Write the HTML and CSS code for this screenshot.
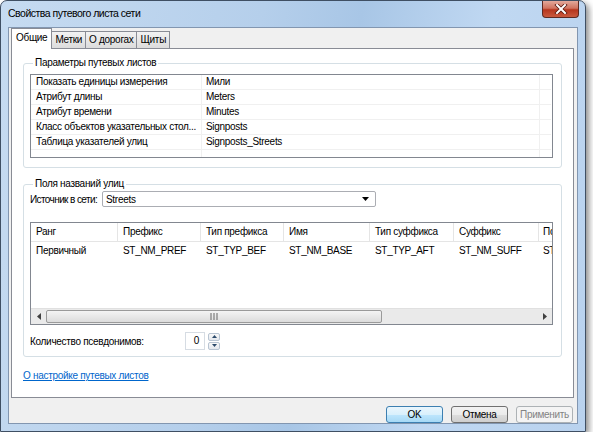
FILE: index.html
```
<!DOCTYPE html>
<html lang="ru">
<head>
  <meta charset="UTF-8" />
  <title>Свойства путевого листа сети</title>
  <link rel="stylesheet" href="styles.css">
</head>
<body>
  <div class="window">
    <div class="titlebar">
      <span class="title">Свойства путевого листа сети</span>
      <div class="close-btn">
        <svg width="14" height="10" viewBox="0 0 14 10">
          <path d="M3 1 L11 9 M11 1 L3 9" stroke="#5a1a10" stroke-width="3.6" stroke-linecap="square"/>
          <path d="M3 1 L11 9 M11 1 L3 9" stroke="#fff" stroke-width="2" stroke-linecap="square"/>
        </svg>
      </div>
    </div>

    <div class="client">
      <!-- вкладки -->
      <div class="tabs">
        <div class="tab active">Общие</div>
        <div class="tab">Метки</div>
        <div class="tab">О дорогах</div>
        <div class="tab">Щиты</div>
      </div>

      <div class="panel">
        <fieldset class="group group-params">
          <legend>Параметры путевых листов</legend>
          <div class="listview props">
            <div class="prop-row"><div class="c1">Показать единицы измерения</div><div class="c2">Мили</div></div>
            <div class="prop-row"><div class="c1">Атрибут длины</div><div class="c2">Meters</div></div>
            <div class="prop-row"><div class="c1">Атрибут времени</div><div class="c2">Minutes</div></div>
            <div class="prop-row"><div class="c1">Класс объектов указательных стол...</div><div class="c2">Signposts</div></div>
            <div class="prop-row"><div class="c1">Таблица указателей улиц</div><div class="c2">Signposts_Streets</div></div>
            <div class="prop-row"><div class="c1"></div><div class="c2"></div></div>
          </div>
        </fieldset>

        <fieldset class="group group-streets">
          <legend>Поля названий улиц</legend>
          <div class="source-row">
            <span class="source-label">Источник в сети:</span>
            <div class="combo">
              <span>Streets</span>
              <svg width="7" height="4" viewBox="0 0 7 4"><path d="M0 0 H7 L3.5 4 Z" fill="#000"/></svg>
            </div>
          </div>

          <div class="listview grid">
            <div class="grid-head">
              <div class="gc">Ранг</div>
              <div class="gc">Префикс</div>
              <div class="gc">Тип префикса</div>
              <div class="gc">Имя</div>
              <div class="gc">Тип суффикса</div>
              <div class="gc">Суффикс</div>
              <div class="gc">Псевдоним</div>
            </div>
            <div class="grid-row">
              <div class="gc">Первичный</div>
              <div class="gc">ST_NM_PREF</div>
              <div class="gc">ST_TYP_BEF</div>
              <div class="gc">ST_NM_BASE</div>
              <div class="gc">ST_TYP_AFT</div>
              <div class="gc">ST_NM_SUFF</div>
              <div class="gc">ST_NM_FULL</div>
            </div>
            <div class="grid-fill"></div>
            <div class="hscroll">
              <div class="arrow">
                <svg width="4" height="7" viewBox="0 0 4 7"><path d="M4 0 V7 L0 3.5 Z" fill="#404040"/></svg>
              </div>
              <div class="track">
                <div class="thumb">
                  <svg width="8" height="7" viewBox="0 0 8 7"><path d="M1 0 V7 M4 0 V7 M7 0 V7" stroke="#666" stroke-width="1"/></svg>
                </div>
              </div>
              <div class="arrow">
                <svg width="4" height="7" viewBox="0 0 4 7"><path d="M0 0 V7 L4 3.5 Z" fill="#404040"/></svg>
              </div>
            </div>
          </div>

          <div class="alias-row">
            <span class="alias-label">Количество псевдонимов:</span>
            <div class="spin-value">0</div>
            <div class="spin-btns">
              <div class="spin-btn"><svg width="5" height="3" viewBox="0 0 5 3"><path d="M0 3 H5 L2.5 0 Z" fill="#2b4a6b"/></svg></div>
              <div class="spin-btn"><svg width="5" height="3" viewBox="0 0 5 3"><path d="M0 0 H5 L2.5 3 Z" fill="#2b4a6b"/></svg></div>
            </div>
          </div>
        </fieldset>

        <a class="help-link" href="#">О настройке путевых листов</a>
      </div>

      <div class="buttons">
        <button class="btn default">OK</button>
        <button class="btn">Отмена</button>
        <button class="btn" disabled>Применить</button>
      </div>
    </div>
  </div>
</body>
</html>
```

FILE: styles.css
```
/* ======= Общие ======= */
body {
  margin: 0;
  background: #fff;
  font-family: "Liberation Sans", Arial, sans-serif;
  font-size: 10px;
  letter-spacing: -0.3px;
  color: #000;
}

/* ======= Окно ======= */
.window {
  width: 586px;
  height: 432px;
  box-sizing: border-box;
  border: 1px solid #3f4f63;
  border-radius: 7px 7px 0 0;
  background: linear-gradient(100deg, #c6dbf1 0%, #b5cfeb 40%, #a8c6e6 55%, #c0d8f2 75%, #b9d2ee 100%);
  padding: 0 7px 7px 7px;
  box-shadow: 3px 3px 6px rgba(0, 0, 0, 0.45);
  display: flex;
  flex-direction: column;
}

.titlebar {
  height: 26px;
  display: flex;
  align-items: flex-start;
  justify-content: space-between;
}
.title {
  font-size: 10.5px;
  letter-spacing: -0.5px;
  line-height: 14px;
  margin-top: 5px;
  color: #000;
}
.close-btn {
  width: 37px;
  height: 17px;
  margin-right: -1px;
  box-sizing: border-box;
  border: 1px solid #5e2a22;
  border-top: none;
  border-radius: 0 0 4px 4px;
  background: linear-gradient(#e3a99b 0%, #d0735f 45%, #b6361e 55%, #c95a3f 100%);
  display: flex;
  align-items: center;
  justify-content: center;
}

.client {
  flex: 1;
  background: #f0f0f0;
  border: 1px solid #8296b0;
  padding: 1px 3px 0 2px;
  display: flex;
  flex-direction: column;
}

/* ======= Вкладки ======= */
.tabs {
  display: flex;
  align-items: flex-end;
  padding-left: 2px;
  height: 19px;
  position: relative;
  z-index: 1;
}
.tab {
  height: 16px;
  line-height: 15px;
  padding: 0 3px;
  border: 1px solid #898c95;
  border-bottom: none;
  margin-right: -1px;
  background: linear-gradient(#f2f2f2, #dcdcdc);
}
.tab.active {
  height: 20px;
  line-height: 17px;
  padding: 0 4px;
  margin-left: -2px;
  margin-right: -1px;
  margin-bottom: -1px;
  background: #fff;
  position: relative;
}

.panel {
  flex: 1;
  background: #fff;
  border: 1px solid #898c95;
  padding: 7px 11px 0 11px;
  display: flex;
  flex-direction: column;
}

/* ======= Группы ======= */
.group {
  margin: 0;
  padding: 2px 8px 9px 6px;
  border: 1px solid #d5dfe5;
  border-radius: 3px;
  min-width: 0;
}
.group legend {
  padding: 0 2px;
  margin-left: 3px;
  line-height: 14px;
}
.group-streets {
  margin-top: 9px;
  padding-top: 0;
  padding-bottom: 6px;
}

.listview {
  border: 1px solid #828790;
  background: #fff;
}

/* свойства */
.props {
  height: 82px;
  overflow: hidden;
  margin-top: 2px;
  position: relative;
}
.props::after {
  content: "";
  position: absolute;
  top: 0;
  bottom: 0;
  left: 508px;
  border-left: 1px solid #f0f0f0;
}
.prop-row {
  display: flex;
  height: 14px;
  line-height: 14px;
  border-bottom: 1px solid #f0f0f0;
  margin-right: 1px;
}
.prop-row .c1 {
  width: 165px;
  padding-left: 5px;
  border-right: 1px solid #f0f0f0;
  white-space: nowrap;
}
.prop-row .c2 {
  padding-left: 4px;
}

/* источник */
.source-row {
  display: flex;
  align-items: center;
}
.source-label {
  width: 72px;
  flex: none;
  white-space: nowrap;
  letter-spacing: -0.6px;
}
.combo {
  width: 274px;
  height: 16px;
  box-sizing: border-box;
  border: 1px solid #abadb3;
  border-radius: 2px;
  display: flex;
  align-items: center;
  justify-content: space-between;
  padding: 0 6px 0 3px;
}

/* таблица полей */
.grid {
  margin-top: 15px;
  height: 103px;
  box-sizing: border-box;
  display: flex;
  flex-direction: column;
  overflow: hidden;
}
.grid-head,
.grid-row {
  display: flex;
  white-space: nowrap;
}
.grid-head {
  height: 18px;
  line-height: 18px;
  border-bottom: 1px solid #e5e5e5;
}
.grid-row {
  height: 17px;
  line-height: 17px;
}
.gc {
  flex: none;
  box-sizing: border-box;
  padding-left: 5px;
  overflow: hidden;
  border-right: 1px solid transparent;
}
.grid-head .gc {
  border-right-color: #e5e5e5;
}
.gc:nth-child(1) { width: 87px; }
.gc:nth-child(2) { width: 83px; }
.gc:nth-child(3) { width: 83px; }
.gc:nth-child(4) { width: 86px; }
.gc:nth-child(5) { width: 84px; }
.gc:nth-child(6) { width: 85px; }
.gc:nth-child(7) { width: 14px; padding-left: 4px; border-right: none; }
.grid-fill {
  flex: 1;
}

.hscroll {
  height: 15px;
  display: flex;
  background: #eaeaea;
  border-top: 1px solid #e0e0e0;
}
.hscroll .arrow {
  width: 15px;
  display: flex;
  align-items: center;
  justify-content: center;
}
.track {
  flex: 1;
  display: flex;
  align-items: stretch;
  padding: 1px 0;
}
.thumb {
  width: 336px;
  box-sizing: border-box;
  border: 1px solid #9a9a9a;
  border-radius: 2px;
  background: linear-gradient(#f4f4f4, #dcdcdc);
  display: flex;
  align-items: center;
  justify-content: center;
}

/* псевдонимы */
.alias-row {
  display: flex;
  align-items: center;
  margin-top: 7px;
  height: 18px;
}
.alias-label {
  width: 155px;
}
.spin-value {
  width: 20px;
  height: 18px;
  box-sizing: border-box;
  border: 1px solid #d6dce3;
  text-align: right;
  padding-right: 5px;
  line-height: 16px;
}
.spin-btns {
  display: flex;
  flex-direction: column;
  gap: 1px;
  margin-left: 3px;
}
.spin-btn {
  width: 12px;
  height: 8px;
  box-sizing: border-box;
  border: 1px solid #b8c4d2;
  border-radius: 2px;
  background: linear-gradient(#f8f8f8, #e4e8ee);
  display: flex;
  align-items: center;
  justify-content: center;
}

.help-link {
  margin-top: 13px;
  color: #0066cc;
  align-self: flex-start;
}

/* ======= Кнопки ======= */
.buttons {
  display: flex;
  justify-content: flex-end;
  gap: 8px;
  padding: 8px 1px 0 0;
}
.btn {
  width: 57px;
  height: 17px;
  padding: 0;
  font-family: inherit;
  font-size: 10px;
  letter-spacing: -0.3px;
  line-height: 15px;
  color: #000;
  border: 1px solid #707070;
  border-radius: 3px;
  background: linear-gradient(#f2f2f2 0%, #ebebeb 50%, #dddddd 51%, #cfcfcf 100%);
}
.btn.default {
  border-color: #3c7fb1;
  background: linear-gradient(#eaf6fd 0%, #d9f0fc 50%, #bee6fd 51%, #a7d9f5 100%);
}
.btn:disabled {
  color: #838383;
  border-color: #adb2b5;
  background: #f4f4f4;
}
```
